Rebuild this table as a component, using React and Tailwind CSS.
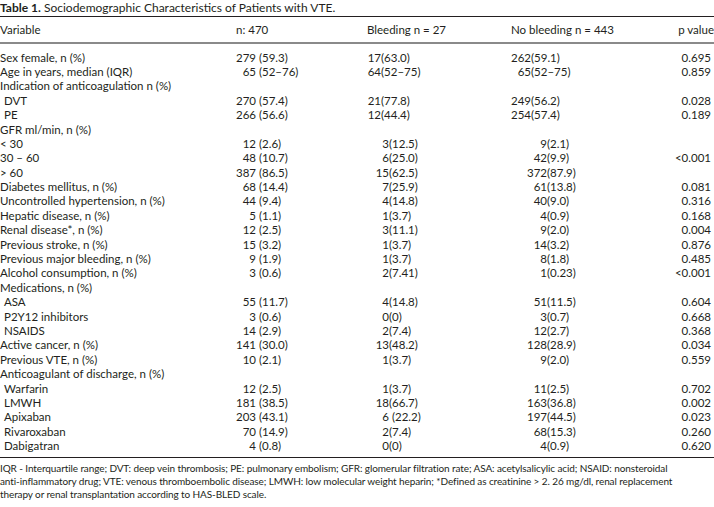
import React from 'react';

// [label, indent, n, nRest, bleedNum, bleedRest, bleedTop, noNum, noRest, noTop, p]
const rows = [
  ['Sex female, n (%)', false, '279', ' (59.3)', '17', '(63.0)', true, '262', '(59.1)', true, '0.695'],
  ['Age in years, median (IQR)', false, '65', ' (52–76)', '64', '(52–75)', true, '65', '(52–75)', true, '0.859'],
  ['Indication of anticoagulation n (%)', false],
  ['DVT', true, '270', ' (57.4)', '21', '(77.8)', true, '249', '(56.2)', true, '0.028'],
  ['PE', true, '266', ' (56.6)', '12', '(44.4)', true, '254', '(57.4)', true, '0.189'],
  ['GFR ml/min, n (%)', false],
  ['< 30', false, '12', ' (2.6)', '3', '(12.5)', false, '9', '(2.1)', false, ''],
  ['30 – 60', false, '48', ' (10.7)', '6', '(25.0)', false, '42', '(9.9)', false, '<0.001'],
  ['> 60', false, '387', ' (86.5)', '15', '(62.5)', false, '372', '(87.9)', false, ''],
  ['Diabetes mellitus, n (%)', false, '68', ' (14.4)', '7', '(25.9)', false, '61', '(13.8)', false, '0.081'],
  ['Uncontrolled hypertension, n (%)', false, '44', ' (9.4)', '4', '(14.8)', false, '40', '(9.0)', false, '0.316'],
  ['Hepatic disease, n (%)', false, '5', ' (1.1)', '1', '(3.7)', false, '4', '(0.9)', false, '0.168'],
  ['Renal disease*, n (%)', false, '12', ' (2.5)', '3', '(11.1)', false, '9', '(2.0)', false, '0.004'],
  ['Previous stroke, n (%)', false, '15', ' (3.2)', '1', '(3.7)', false, '14', '(3.2)', false, '0.876'],
  ['Previous major bleeding, n (%)', false, '9', ' (1.9)', '1', '(3.7)', false, '8', '(1.8)', false, '0.485'],
  ['Alcohol consumption, n (%)', false, '3', ' (0.6)', '2', '(7.41)', false, '1', '(0.23)', false, '<0.001'],
  ['Medications, n (%)', false],
  ['ASA', true, '55', ' (11.7)', '4', '(14.8)', false, '51', '(11.5)', false, '0.604'],
  ['P2Y12 inhibitors', true, '3', ' (0.6)', '0', '(0)', false, '3', '(0.7)', false, '0.668'],
  ['NSAIDS', true, '14', ' (2.9)', '2', '(7.4)', false, '12', '(2.7)', false, '0.368'],
  ['Active cancer, n (%)', false, '141', ' (30.0)', '13', '(48.2)', false, '128', '(28.9)', false, '0.034'],
  ['Previous VTE, n (%)', false, '10', ' (2.1)', '1', '(3.7)', false, '9', '(2.0)', false, '0.559'],
  ['Anticoagulant of discharge, n (%)', false],
  ['Warfarin', true, '12', ' (2.5)', '1', '(3.7)', false, '11', '(2.5)', false, '0.702'],
  ['LMWH', true, '181', ' (38.5)', '18', '(66.7)', false, '163', '(36.8)', false, '0.002'],
  ['Apixaban', true, '203', ' (43.1)', '6', ' (22.2)', false, '197', '(44.5)', false, '0.023'],
  ['Rivaroxaban', true, '70', ' (14.9)', '2', '(7.4)', false, '68', '(15.3)', false, '0.260'],
  ['Dabigatran', true, '4', ' (0.8)', '0', '(0)', false, '4', '(0.9)', false, '0.620'],
];

function Row({ r }) {
  const [label, indent, n, nRest, bNum, bRest, bTop, noNum, noRest, noTop, p] = r;
  return (
    <div className="flex h-[14.4px] items-center whitespace-pre">
      <div className={`w-[236px] ${indent ? 'pl-[4px]' : ''}`}>{label}</div>
      <div className="flex w-[131px]">
        {n && <span className="w-[20px] text-right">{n}</span>}
        {n && <span>{nRest}</span>}
      </div>
      <div className="flex w-[144px]">
        {bNum && <span className={`text-right ${bTop ? 'w-[14px]' : 'w-[22px]'}`}>{bNum}</span>}
        {bNum && <span>{bRest}</span>}
      </div>
      <div className="flex w-[89px]">
        {noNum && <span className={`text-right ${noTop ? 'w-[20px]' : 'w-[36px]'}`}>{noNum}</span>}
        {noNum && <span>{noRest}</span>}
      </div>
      <div className="w-[111px] text-right">{p}</div>
    </div>
  );
}

export default function App() {
  return (
    <div className="w-[714px] h-[507px] overflow-hidden bg-white text-[#231f20] font-['Lato',sans-serif] text-[11.5px]">
      <div className="h-[16px] leading-[16px] text-[12px]">
        <span className="font-bold">Table 1.</span> Sociodemographic Characteristics of Patients with VTE.
      </div>
      <div className="border-t border-[#231f20]" />
      <div className="flex h-[25px] items-center whitespace-pre">
        <div className="w-[236px]">Variable</div>
        <div className="w-[131px]">n: 470</div>
        <div className="w-[144px]">Bleeding n = 27</div>
        <div className="w-[89px]">No bleeding n = 443</div>
        <div className="w-[114px] text-right">p value</div>
      </div>
      <div className="border-t-2 border-[#8a8a8a]" />
      <div className="pt-[6px] pb-[4px]">
        {rows.map((r, i) => (
          <Row key={i} r={r} />
        ))}
      </div>
      <div className="border-t border-[#231f20]" />
      <div className="pt-[4px] text-[10px] leading-[13px] tracking-[-0.1px] whitespace-nowrap">
        IQR - Interquartile range; DVT: deep vein thrombosis; PE: pulmonary embolism; GFR: glomerular filtration rate; ASA: acetylsalicylic acid; NSAID: nonsteroidal
        <br />
        anti-inflammatory drug; VTE: venous thromboembolic disease; LMWH: low molecular weight heparin; *Defined as creatinine &gt; 2. 26 mg/dl, renal replacement
        <br />
        therapy or renal transplantation according to HAS-BLED scale.
      </div>
    </div>
  );
}
